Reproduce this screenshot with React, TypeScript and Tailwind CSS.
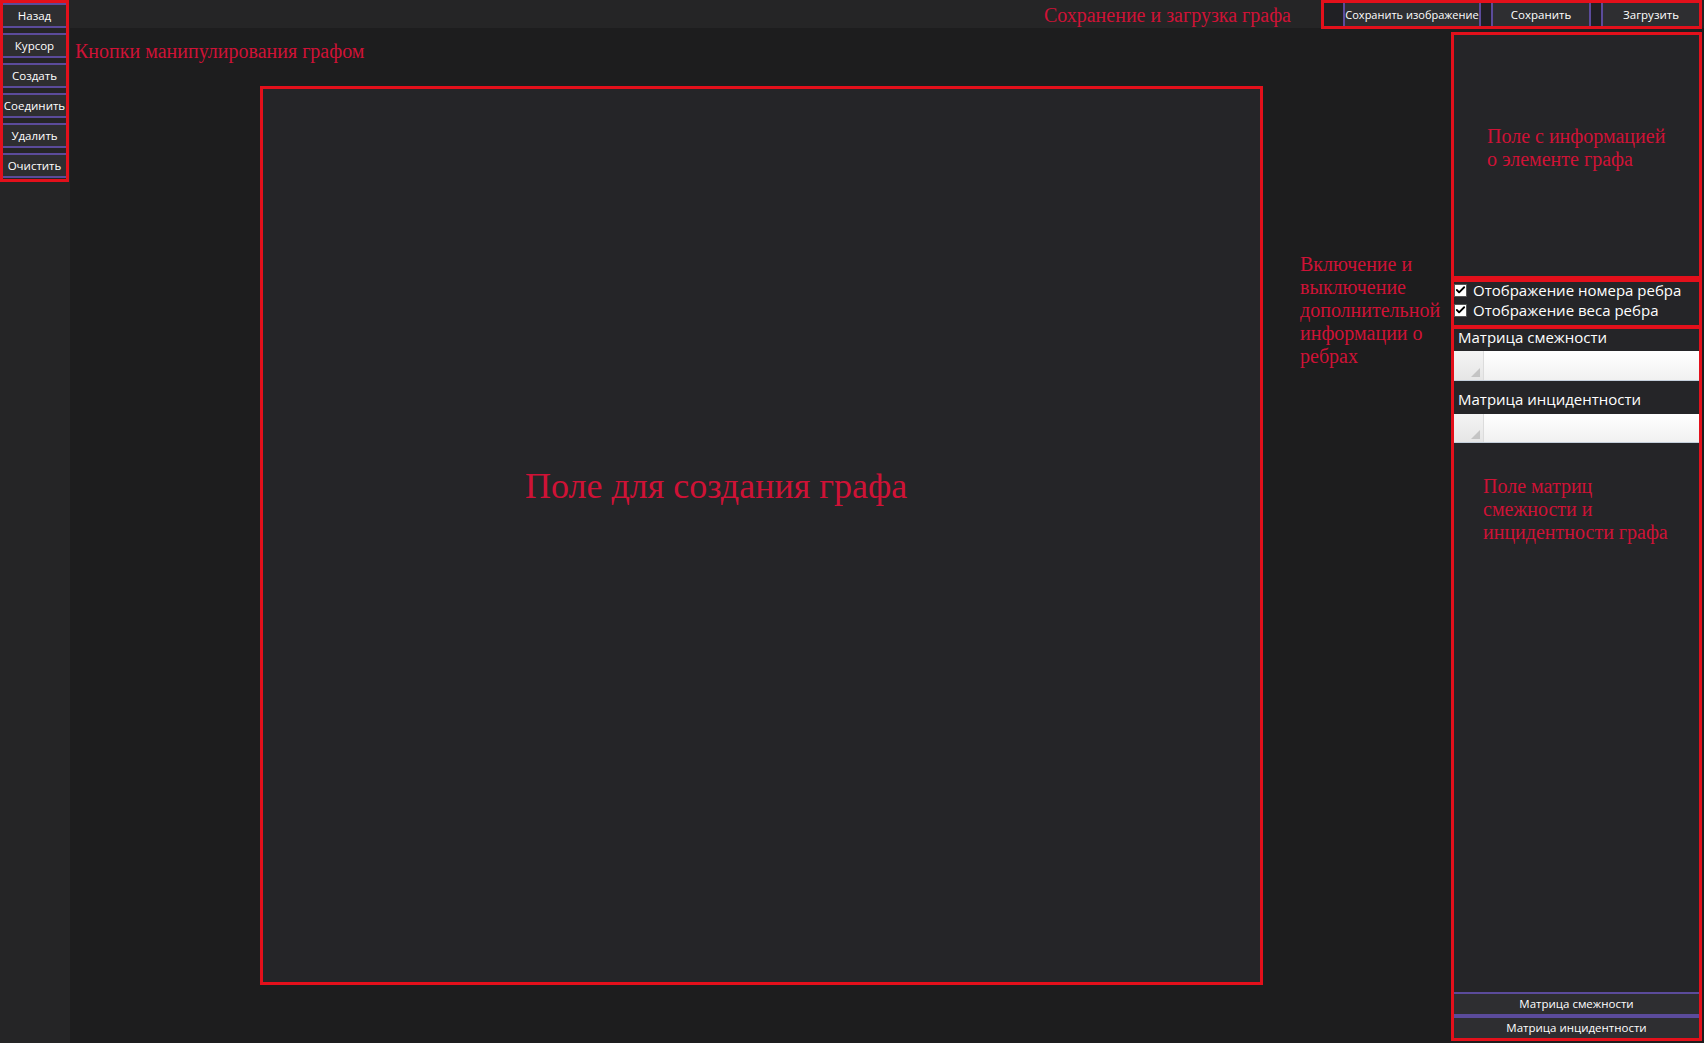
import { Check } from "lucide-react";

const TOOLS = ["Назад", "Курсор", "Создать", "Соединить", "Удалить", "Очистить"];

function Annotation({ lines, className = "" }: { lines: string[]; className?: string }) {
    return (
        <div className={`font-['Liberation_Serif',serif] text-[20px] leading-[23px] text-[#cf1236] ${className}`}>
            {lines.map((l) => (
                <div key={l} className="whitespace-nowrap">
                    {l}
                </div>
            ))}
        </div>
    );
}

function MatrixGrid({ h }: { h: string }) {
    return (
        <div className={`flex ${h} border-b border-[#c5cfdb] bg-gradient-to-b from-white to-[#f1f1f1]`}>
            <div className="relative w-[30px] border-r border-[#dcdcdc] bg-gradient-to-b from-[#f4f4f4] to-[#e6e6e6]">
                {/* select-all corner */}
                <div className="absolute bottom-[3px] right-[3px] h-0 w-0 border-b-[9px] border-l-[9px] border-b-[#c4c4c4] border-l-transparent" />
            </div>
        </div>
    );
}

function EdgeOption({ label }: { label: string }) {
    return (
        <label className="flex h-[20px] items-center gap-[6px]">
            <span className="flex h-[13px] w-[13px] items-center justify-center border border-[#555] bg-white">
                <Check className="h-[12px] w-[12px] text-black" strokeWidth={4} />
            </span>
            <span className="text-[15px] leading-[18px] text-white">{label}</span>
        </label>
    );
}

export default function App() {
    return (
        <div className="flex h-[1043px] w-[1704px] overflow-hidden bg-[#1d1d1e] font-['Open_Sans',sans-serif] text-white">
            {/* Tools sidebar */}
            <aside className="w-[70px] shrink-0 bg-[#252526]">
                <div className="flex w-[69px] flex-col gap-[5px] border-[3px] border-[#e3101b] pb-[1px]">
                    {TOOLS.map((t) => (
                        <button
                            key={t}
                            className="h-[25px] whitespace-nowrap border-y-2 border-[#5b4b9b] bg-[#2e2e31] text-[11.5px] leading-none text-white"
                        >
                            {t}
                        </button>
                    ))}
                </div>
            </aside>

            <div className="flex min-w-0 flex-1 flex-col">
                {/* Top bar */}
                <header className="flex h-[28px] shrink-0 items-start justify-end bg-[#252526] pr-[2px]">
                    <span className="mr-[30px] mt-[4px] whitespace-nowrap font-['Liberation_Serif',serif] text-[20px] leading-[22px] text-[#cf1236]">
                        Сохранение и загрузка графа
                    </span>
                    <div className="relative z-10 flex h-[29px] w-[381px] shrink-0 gap-[10px] border-[3px] border-[#e3101b] bg-[#202024] pl-[19px]">
                        <button className="w-[138px] whitespace-nowrap border-x-2 border-[#5b4b9b] bg-[#2e2e31] text-[11px] leading-none">
                            Сохранить изображение
                        </button>
                        <button className="w-[100px] whitespace-nowrap border-x-2 border-[#5b4b9b] bg-[#2e2e31] text-[11.5px] leading-none">
                            Сохранить
                        </button>
                        <button className="flex-1 whitespace-nowrap border-l-2 border-[#5b4b9b] bg-[#2e2e31] text-[11.5px] leading-none">
                            Загрузить
                        </button>
                    </div>
                </header>

                <div className="flex flex-1">
                    {/* Graph area */}
                    <main className="w-[1193px] shrink-0 pt-[12px]">
                        <Annotation lines={["Кнопки манипулирования графом"]} className="ml-[5px] leading-[22px]" />
                        <div className="ml-[190px] mt-[23px] h-[899px] w-[1003px] border-[3px] border-[#e3101b] bg-[#252528] pl-[262px] pt-[377px]">
                            <div className="font-['Liberation_Serif',serif] text-[36px] leading-[40px] text-[#cf1236]">
                                Поле для создания графа
                            </div>
                        </div>
                    </main>

                    <div className="w-[188px] shrink-0 pl-[37px] pt-[225px]">
                        <Annotation
                            lines={["Включение и", "выключение", "дополнительной", "информации о", "ребрах"]}
                            className="leading-[22.8px]"
                        />
                    </div>

                    {/* Right panel */}
                    <section className="mr-[2px] flex w-[251px] shrink-0 flex-col pb-[2px] pt-[4px]">
                        <div className="h-[247px] border-[3px] border-[#e3101b] bg-[#252528] pl-[33px] pt-[90px]">
                            <Annotation lines={["Поле с информацией", "о элементе графа"]} />
                        </div>

                        <div className="flex h-[49px] flex-col border-[3px] border-[#e3101b] bg-[#252528]">
                            <div className="-mt-[2px]">
                                <EdgeOption label="Отображение номера ребра" />
                                <EdgeOption label="Отображение веса ребра" />
                            </div>
                        </div>

                        <div className="-mt-[2px] flex flex-1 flex-col border-[3px] border-[#e3101b] bg-[#252528]">
                            <div className="h-[22px] pl-[4px] text-[15px] leading-[16px]">Матрица смежности</div>
                            <MatrixGrid h="h-[30px]" />
                            <div className="h-[33px] pl-[4px] pt-[10px] text-[15px] leading-[16px]">Матрица инцидентности</div>
                            <MatrixGrid h="h-[29px]" />

                            <Annotation
                                lines={["Поле матриц", "смежности и", "инцидентности графа"]}
                                className="mt-[32px] pl-[29px]"
                            />

                            <div className="flex-1" />

                            <button className="h-[24px] whitespace-nowrap border-y-2 border-[#5b4b9b] bg-[#2e2e31] text-[11.5px] leading-none">
                                Матрица смежности
                            </button>
                            <button className="h-[22px] whitespace-nowrap border-t-2 border-[#5b4b9b] bg-[#2e2e31] text-[11.5px] leading-none">
                                Матрица инцидентности
                            </button>
                        </div>
                    </section>
                </div>
            </div>
        </div>
    );
}
